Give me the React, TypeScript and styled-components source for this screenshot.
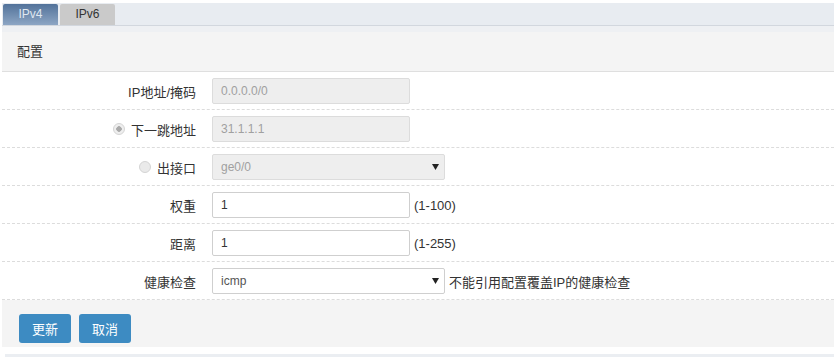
import React from 'react'
import styled, { createGlobalStyle } from 'styled-components'

const GlobalStyle = createGlobalStyle`
  body {
    margin: 0;
    background: #fff;
    font-family: "Liberation Sans", "Noto Sans CJK SC", sans-serif;
    font-size: 13px;
    color: #333;
  }
`

const rows = [
  { label: 'IP地址/掩码', kind: 'input', value: '0.0.0.0/0', disabled: true },
  { label: '下一跳地址', kind: 'input', value: '31.1.1.1', disabled: true, radio: 'on' },
  { label: '出接口', kind: 'select', value: 'ge0/0', disabled: true, radio: 'off' },
  { label: '权重', kind: 'input', value: '1', hint: '(1-100)' },
  { label: '距离', kind: 'input', value: '1', hint: '(1-255)' },
  { label: '健康检查', kind: 'select', value: 'icmp', hint: '不能引用配置覆盖IP的健康检查' },
]

const Arrow = () => (
  <svg width="7" height="6" viewBox="0 0 7 6">
    <path d="M0 0 H7 L3.5 6 Z" fill="#222" />
  </svg>
)

export default function App() {
  return (
    <>
      <GlobalStyle />
      <Page>
        <TabBar>
          <Tab $active>IPv4</Tab>
          <Tab>IPv6</Tab>
        </TabBar>
        <Strip />
        <PanelHeader>配置</PanelHeader>
        <Form>
          {rows.map((r) => (
            <Row key={r.label}>
              <Label>
                {r.radio && <Radio $checked={r.radio === 'on'} />}
                {r.label}
              </Label>
              <Control>
                {r.kind === 'input' ? (
                  <TextInput
                    defaultValue={r.value}
                    disabled={r.disabled}
                    $disabled={!!r.disabled}
                  />
                ) : (
                  <SelectBox $disabled={!!r.disabled}>
                    <span>{r.value}</span>
                    <Arrow />
                  </SelectBox>
                )}
                {r.hint && <Hint>{r.hint}</Hint>}
              </Control>
            </Row>
          ))}
        </Form>
        <Footer>
          <Button>更新</Button>
          <Button>取消</Button>
        </Footer>
        <BottomEdge />
      </Page>
    </>
  )
}

const Page = styled.div`
  width: 832px;
  padding: 3px 5px 0 2px;
`

const TabBar = styled.div`
  display: flex;
  align-items: flex-end;
  gap: 2px;
  height: 22px;
  padding-left: 1px;
  background: #e8ecf1;
  border-bottom: 1px solid #d2d7de;
`

const Tab = styled.div<{ $active?: boolean }>`
  width: 55px;
  height: 21px;
  line-height: 21px;
  text-align: center;
  font-size: 12px;
  color: ${(p) => (p.$active ? '#dfe7f0' : '#333')};
  background: ${(p) =>
    p.$active ? 'linear-gradient(to bottom, #52729a, #8da6c4)' : '#cacaca'};
  border-radius: 2px 2px 0 0;
`

const Strip = styled.div`
  height: 6px;
  background: #eef0f3;
`

const PanelHeader = styled.div`
  height: 39px;
  line-height: 39px;
  padding-left: 15px;
  background: #f4f4f4;
  border-bottom: 1px solid #dfdfdf;
`

const Form = styled.div`
  display: flex;
  flex-direction: column;
`

const Row = styled.div`
  display: grid;
  grid-template-columns: 194px 1fr;
  column-gap: 16px;
  align-items: center;
  padding: 6px 0 5px;
  border-bottom: 1px dashed #dcdcdc;
`

const Label = styled.div`
  display: flex;
  justify-content: flex-end;
  align-items: center;
  font-size: 13px;
`

const Radio = styled.span<{ $checked: boolean }>`
  width: 10px;
  height: 10px;
  margin-right: 6px;
  border-radius: 50%;
  border: 1px solid #d4d4d4;
  background: ${(p) =>
    p.$checked ? 'radial-gradient(circle, #aaa 0 2.5px, #eee 3px)' : '#eaeaea'};
`

const Control = styled.div`
  display: flex;
  align-items: center;
`

const TextInput = styled.input<{ $disabled: boolean }>`
  box-sizing: border-box;
  width: 198px;
  height: 26px;
  padding: 0 8px;
  font-family: inherit;
  font-size: 12px;
  color: ${(p) => (p.$disabled ? '#a0a0a0' : '#333')};
  background: ${(p) => (p.$disabled ? '#eeeeee' : '#fff')};
  border: 1px solid ${(p) => (p.$disabled ? '#dcdcdc' : '#cfcfcf')};
  border-radius: 2px;
  outline: none;
`

const SelectBox = styled.div<{ $disabled: boolean }>`
  box-sizing: border-box;
  display: flex;
  align-items: center;
  justify-content: space-between;
  width: 233px;
  height: 26px;
  padding: 0 5px 0 8px;
  font-size: 12px;
  color: ${(p) => (p.$disabled ? '#a0a0a0' : '#555')};
  background: ${(p) => (p.$disabled ? '#eeeeee' : '#fff')};
  border: 1px solid ${(p) => (p.$disabled ? '#dcdcdc' : '#cfcfcf')};
  border-radius: 2px;
`

const Hint = styled.span`
  margin-left: 4px;
  font-size: 13px;
  color: #333;
`

const Footer = styled.div`
  display: flex;
  gap: 8px;
  height: 47px;
  box-sizing: border-box;
  padding: 14px 17px 0;
  background: #f4f4f4;
`

const Button = styled.button`
  width: 52px;
  height: 29px;
  border: none;
  border-radius: 3px;
  background: #3d8bc2;
  color: #fff;
  font-family: inherit;
  font-size: 13px;
  cursor: pointer;
`

const BottomEdge = styled.div`
  height: 4px;
  margin: 7px 0 0 3px;
  background: #ebeef2;
`
